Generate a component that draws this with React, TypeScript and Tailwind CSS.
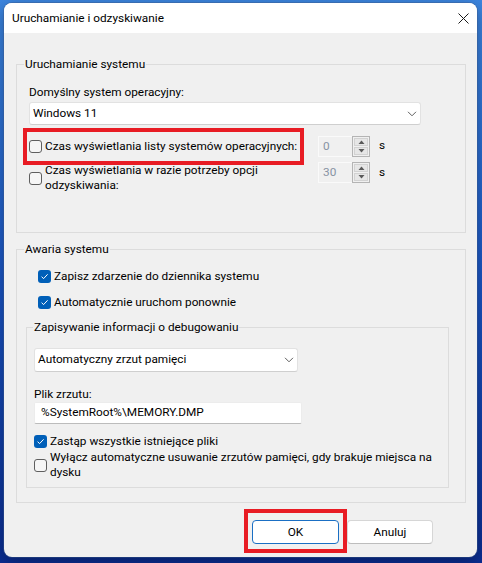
import React from "react";

function Check({ checked }: { checked: boolean }) {
  if (checked) {
    return (
      <span className="w-[13px] h-[13px] rounded-[3px] bg-[#005fb8] flex items-center justify-center shrink-0">
        <svg width="9" height="9" viewBox="0 0 9 9">
          <path d="M1.6 4.7 L3.6 6.6 L7.6 2.3" stroke="white" strokeWidth="1" fill="none" />
        </svg>
      </span>
    );
  }
  return <span className="w-[13px] h-[13px] rounded-[3px] border border-[#5f5f5f] bg-[#f6f6f6] shrink-0" />;
}

function Chevron() {
  return (
    <svg width="10" height="6" viewBox="0 0 10 6">
      <path d="M1 0.8 L5 4.8 L9 0.8" stroke="#5f5f5f" strokeWidth="1" fill="none" />
    </svg>
  );
}

function Tri({ up }: { up: boolean }) {
  return (
    <svg width="7" height="4" viewBox="0 0 7 4">
      {up ? <path d="M0.5 4 L3.5 0.5 L6.5 4 Z" fill="#5a5a5a" /> : <path d="M0.5 0 L3.5 3.5 L6.5 0 Z" fill="#5a5a5a" />}
    </svg>
  );
}

function Spin({ value }: { value: string }) {
  return (
    <div className="flex w-[52px] h-[21px] shrink-0">
      <div className="flex-1 border border-[#fafafa] border-r-0 text-[#8793a3] pl-[4px] leading-[19px]">{value}</div>
      <div className="w-[18px] border border-[#b4b4b4] flex flex-col p-px gap-px bg-[#f0f0f0]">
        <div className="flex-1 bg-[#e6e6e6] border border-[#d2d2d2] flex items-center justify-center">
          <Tri up />
        </div>
        <div className="flex-1 bg-[#e6e6e6] border border-[#d2d2d2] flex items-center justify-center">
          <Tri up={false} />
        </div>
      </div>
    </div>
  );
}

export default function App() {
  return (
    <div
      className="w-[482px] h-[563px] pt-[3px] pl-[4px] bg-gradient-to-b from-[#3d86e0] via-[#1a55c4] to-[#0b2d92] overflow-hidden text-[11.8px] text-black"
      style={{ fontFamily: '"Segoe UI", Roboto, "Noto Sans", sans-serif' }}
    >
      <div className="relative w-[473px] h-[554px] rounded-[8px] bg-[#f0f0f0] overflow-hidden flex flex-col ring-1 ring-[#3b5a8c]/40 shadow-[0_4px_16px_rgba(0,0,0,0.35)]">
        {/* Title bar */}
        <div className="h-[30px] bg-white flex items-center justify-between pl-[8px] pr-[8px] shrink-0">
          <span className="leading-[16px]">Uruchamianie i odzyskiwanie</span>
          <svg width="11" height="11" viewBox="0 0 11 11">
            <path d="M0.5 0.5 L10.5 10.5 M10.5 0.5 L0.5 10.5" stroke="#1a1a1a" strokeWidth="1" />
          </svg>
        </div>

        {/* Body */}
        <div className="flex flex-col pl-[12px]">
          {/* Group 1 */}
          <fieldset className="mt-[23px] w-[450px] h-[177px] border border-[#dcdcdc] p-0 m-0 min-w-0">
            <legend className="ml-[7px] px-[1px] leading-[16px]">Uruchamianie systemu</legend>
            <div className="flex flex-col pl-[12px] pt-[12px]">
              <div className="leading-[16px]">Domyślny system operacyjny:</div>
              <div className="mt-[2px] w-[392px] h-[23px] bg-white border border-[#e2e2e2] border-b-[#cfcfcf] rounded-[3px] flex items-center justify-between pl-[3px] pr-[3px]">
                <span>Windows 11</span>
                <Chevron />
              </div>
              <div className="mt-[10px] h-[22px] flex items-center">
                <div className="w-[289px] flex items-center gap-[3px]">
                  <Check checked={false} />
                  <span className="leading-[16px] whitespace-nowrap">Czas wyświetlania listy systemów operacyjnych:</span>
                </div>
                <Spin value="0" />
                <span className="ml-[9px]">s</span>
              </div>
              <div className="mt-[5px] flex items-start">
                <div className="w-[289px] flex items-center gap-[3px] pt-[1px]">
                  <Check checked={false} />
                  <span className="leading-[15px] w-[235px]">Czas wyświetlania w razie potrzeby opcji odzyskiwania:</span>
                </div>
                <div className="flex items-center">
                  <Spin value="30" />
                  <span className="ml-[9px]">s</span>
                </div>
              </div>
            </div>
          </fieldset>

          {/* Group 2 */}
          <fieldset className="mt-[8px] w-[450px] h-[262px] border border-[#dcdcdc] p-0 m-0 min-w-0">
            <legend className="ml-[7px] px-[1px] leading-[16px]">Awaria systemu</legend>
            <div className="flex flex-col pl-[9px] pt-[11px]">
              <div className="h-[16px] flex items-center gap-[3px] pl-[12px]">
                <Check checked />
                <span className="leading-[16px]">Zapisz zdarzenie do dziennika systemu</span>
              </div>
              <div className="mt-[10px] h-[16px] flex items-center gap-[3px] pl-[12px]">
                <Check checked />
                <span className="leading-[16px]">Automatycznie uruchom ponownie</span>
              </div>

              {/* Nested group */}
              <fieldset className="mt-[9px] w-[423px] h-[169px] border border-[#dcdcdc] p-0 m-0 min-w-0">
                <legend className="ml-[6px] px-[1px] leading-[16px]">Zapisywanie informacji o debugowaniu</legend>
                <div className="flex flex-col pl-[7px] pt-[13px]">
                  <div className="w-[264px] h-[24px] bg-white border border-[#e2e2e2] border-b-[#cfcfcf] rounded-[3px] flex items-center justify-between pl-[3px] pr-[3px]">
                    <span>Automatyczny zrzut pamięci</span>
                    <Chevron />
                  </div>
                  <div className="mt-[15px] leading-[15px]">Plik zrzutu:</div>
                  <div className="w-[268px] h-[22px] bg-white border border-[#ececec] border-b-[#bcbcbc] rounded-[2px] flex items-center pl-[6px]">
                    %SystemRoot%\MEMORY.DMP
                  </div>
                  <div className="mt-[9px] h-[16px] flex items-center gap-[3px]">
                    <Check checked />
                    <span className="leading-[16px]">Zastąp wszystkie istniejące pliki</span>
                  </div>
                  <div className="mt-[1px] flex items-center gap-[3px]">
                    <Check checked={false} />
                    <span className="leading-[15px] w-[392px]">
                      Wyłącz automatyczne usuwanie zrzutów pamięci, gdy brakuje miejsca na dysku
                    </span>
                  </div>
                </div>
              </fieldset>
            </div>
          </fieldset>
        </div>

        {/* Buttons */}
        <div className="mt-[17px] flex justify-end gap-[8px] pr-[44px]">
          <button className="w-[87px] h-[24px] bg-white border border-[#1a6fc4] rounded-[4px] leading-[16px] text-black">
            OK
          </button>
          <button className="w-[86px] h-[24px] bg-white border border-[#d6d6d6] border-b-[#bdbdbd] rounded-[4px] leading-[16px] text-black">
            Anuluj
          </button>
        </div>

        {/* Annotation boxes */}
        <div className="absolute left-[19px] top-[125px] w-[281px] h-[37px] border-[4px] border-[#e81c24] pointer-events-none" />
        <div className="absolute left-[240px] top-[506px] w-[103px] h-[44px] border-[4px] border-[#e81c24] pointer-events-none" />
      </div>
    </div>
  );
}
